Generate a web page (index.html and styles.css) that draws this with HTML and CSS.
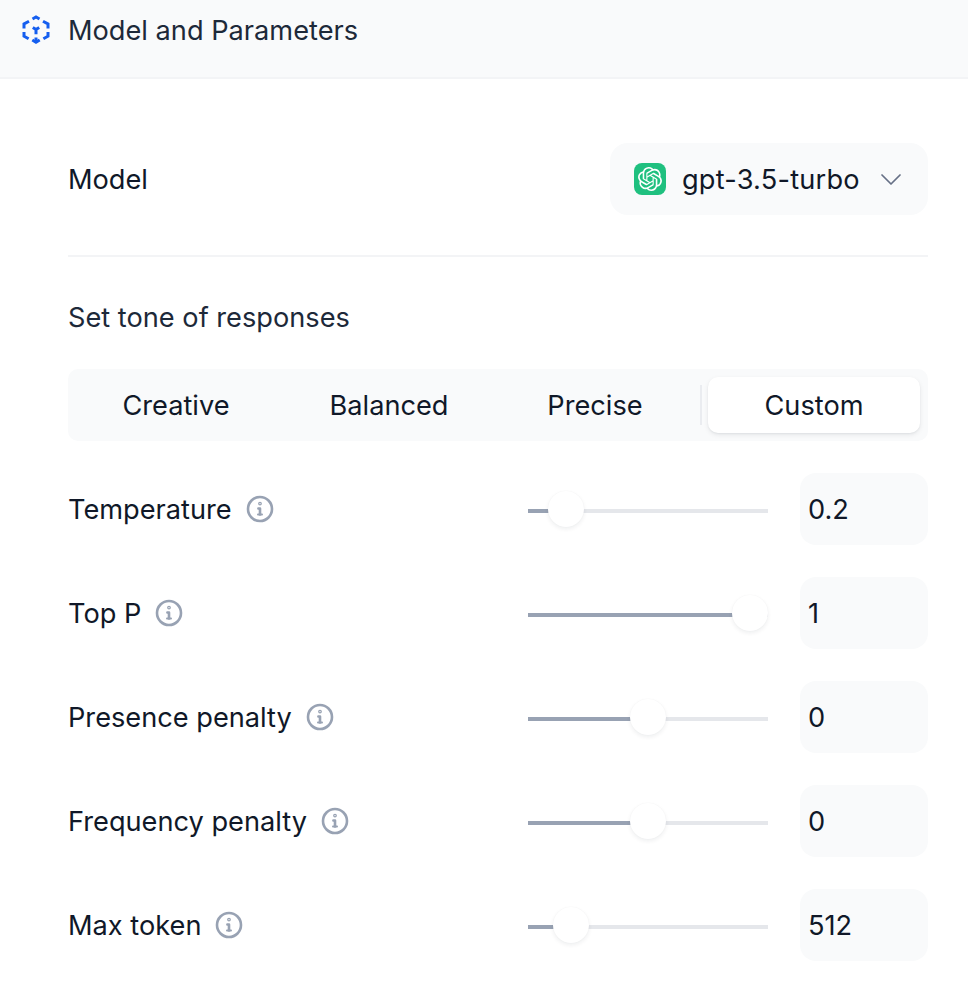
FILE: index.html
```html
<!DOCTYPE html>
<html lang="en">
<head>
<meta charset="utf-8">
<title>Model and Parameters</title>
<link rel="stylesheet" href="styles.css">
</head>
<body>
<header class="header">
  <svg class="cube" viewBox="0 0 28 30" fill="none" stroke="#155EEF" stroke-width="3" stroke-linecap="butt" stroke-linejoin="miter">
    <path d="M10.5 4 14 2l3.5 2"/>
    <path d="M7 6.2 2 9v4.4"/>
    <path d="M21 6.2 26 9v4.4"/>
    <path d="M2 17v4.2l4.6 2.6"/>
    <path d="M26 17v4.2l-4.6 2.6"/>
    <path d="M10.8 12.6 14 14.6l3.2-2M14 14.6v4.6"/>
    <path d="M14 22.5v4.5"/>
    <path d="M10.3 25 14 27.2l3.7-2.2"/>
  </svg>
  <h1 class="title">Model and Parameters</h1>
</header>
<main class="content">
  <section class="model-row">
    <span class="label">Model</span>
    <div class="select">
      <span class="logo">
        <svg viewBox="0 0 24 24" fill="#fff"><path d="M22.2819 9.8211a5.9847 5.9847 0 0 0-.5157-4.9108 6.0462 6.0462 0 0 0-6.5098-2.9A6.0651 6.0651 0 0 0 4.9807 4.1818a5.9847 5.9847 0 0 0-3.9977 2.9 6.0462 6.0462 0 0 0 .7427 7.0966 5.98 5.98 0 0 0 .511 4.9107 6.051 6.051 0 0 0 6.5146 2.9001A5.9847 5.9847 0 0 0 13.2599 24a6.0557 6.0557 0 0 0 5.7718-4.2058 5.9894 5.9894 0 0 0 3.9977-2.9001 6.0557 6.0557 0 0 0-.7475-7.0729zm-9.022 12.6081a4.4755 4.4755 0 0 1-2.8764-1.0408l.1419-.0804 4.7783-2.7582a.7948.7948 0 0 0 .3927-.6813v-6.7369l2.02 1.1686a.071.071 0 0 1 .038.052v5.5826a4.504 4.504 0 0 1-4.4945 4.4944zm-9.6607-4.1254a4.4708 4.4708 0 0 1-.5346-3.0137l.142.0852 4.783 2.7582a.7712.7712 0 0 0 .7806 0l5.8428-3.3685v2.3324a.0804.0804 0 0 1-.0332.0615L9.74 19.9502a4.4992 4.4992 0 0 1-6.1408-1.6464zM2.3408 7.8956a4.485 4.485 0 0 1 2.3655-1.9728V11.6a.7664.7664 0 0 0 .3879.6765l5.8144 3.3543-2.0201 1.1685a.0757.0757 0 0 1-.071 0l-4.8303-2.7865A4.504 4.504 0 0 1 2.3408 7.872zm16.5963 3.8558L13.1038 8.364 15.1192 7.2a.0757.0757 0 0 1 .071 0l4.8303 2.7913a4.4944 4.4944 0 0 1-.6765 8.1042v-5.6772a.79.79 0 0 0-.407-.667zm2.0107-3.0231l-.142-.0852-4.7735-2.7818a.7759.7759 0 0 0-.7854 0L9.409 9.2297V6.8974a.0662.0662 0 0 1 .0284-.0615l4.8303-2.7866a4.4992 4.4992 0 0 1 6.6802 4.66zM8.3065 12.863l-2.02-1.1638a.0804.0804 0 0 1-.038-.0567V6.0742a4.4992 4.4992 0 0 1 7.3757-3.4537l-.142.0805L8.704 5.459a.7948.7948 0 0 0-.3927.6813zm1.0976-2.3654l2.602-1.4998 2.6069 1.4998v2.9994l-2.5974 1.4997-2.6067-1.4997Z"/></svg>
      </span>
      <span class="select-text">gpt-3.5-turbo</span>
      <svg class="chevron" viewBox="0 0 20 11" fill="none" stroke="#667085" stroke-width="1.7" stroke-linecap="round" stroke-linejoin="round"><path d="M1 1l9 9 9-9"/></svg>
    </div>
  </section>
  <hr class="divider">
  <h2 class="tone-title">Set tone of responses</h2>
  <div class="tabs">
    <span class="tab">Creative</span>
    <span class="tab">Balanced</span>
    <span class="tab">Precise</span>
    <span class="tab-sep"></span>
    <span class="tab tab-active">Custom</span>
  </div>
  <div class="params">
    <div class="param">
      <div class="param-label"><span class="label">Temperature</span>
        <svg class="info" viewBox="0 0 28 28" fill="none" stroke="#98A2B3" stroke-width="2.6" stroke-linecap="round" stroke-linejoin="round"><circle cx="14" cy="14" r="12"/><path d="M14 19.5v-6h-1.6"/><path d="M12 19.5h4" stroke-width="2"/><circle cx="14" cy="8.6" r=".6"/></svg>
      </div>
      <div class="slider"><div class="track"><div class="fill" style="width:38px"></div></div><span class="thumb" style="left:20px"></span></div>
      <div class="value">0.2</div>
    </div>
    <div class="param">
      <div class="param-label"><span class="label">Top P</span>
        <svg class="info" viewBox="0 0 28 28" fill="none" stroke="#98A2B3" stroke-width="2.6" stroke-linecap="round" stroke-linejoin="round"><circle cx="14" cy="14" r="12"/><path d="M14 19.5v-6h-1.6"/><path d="M12 19.5h4" stroke-width="2"/><circle cx="14" cy="8.6" r=".6"/></svg>
      </div>
      <div class="slider"><div class="track"><div class="fill" style="width:222px"></div></div><span class="thumb" style="left:204px"></span></div>
      <div class="value">1</div>
    </div>
    <div class="param">
      <div class="param-label"><span class="label">Presence penalty</span>
        <svg class="info" viewBox="0 0 28 28" fill="none" stroke="#98A2B3" stroke-width="2.6" stroke-linecap="round" stroke-linejoin="round"><circle cx="14" cy="14" r="12"/><path d="M14 19.5v-6h-1.6"/><path d="M12 19.5h4" stroke-width="2"/><circle cx="14" cy="8.6" r=".6"/></svg>
      </div>
      <div class="slider"><div class="track"><div class="fill" style="width:120px"></div></div><span class="thumb" style="left:102px"></span></div>
      <div class="value">0</div>
    </div>
    <div class="param">
      <div class="param-label"><span class="label">Frequency penalty</span>
        <svg class="info" viewBox="0 0 28 28" fill="none" stroke="#98A2B3" stroke-width="2.6" stroke-linecap="round" stroke-linejoin="round"><circle cx="14" cy="14" r="12"/><path d="M14 19.5v-6h-1.6"/><path d="M12 19.5h4" stroke-width="2"/><circle cx="14" cy="8.6" r=".6"/></svg>
      </div>
      <div class="slider"><div class="track"><div class="fill" style="width:120px"></div></div><span class="thumb" style="left:102px"></span></div>
      <div class="value">0</div>
    </div>
    <div class="param">
      <div class="param-label"><span class="label">Max token</span>
        <svg class="info" viewBox="0 0 28 28" fill="none" stroke="#98A2B3" stroke-width="2.6" stroke-linecap="round" stroke-linejoin="round"><circle cx="14" cy="14" r="12"/><path d="M14 19.5v-6h-1.6"/><path d="M12 19.5h4" stroke-width="2"/><circle cx="14" cy="8.6" r=".6"/></svg>
      </div>
      <div class="slider"><div class="track"><div class="fill" style="width:43px"></div></div><span class="thumb" style="left:25px"></span></div>
      <div class="value">512</div>
    </div>
  </div>
</main>
</body>
</html>
```
FILE: styles.css
```css
* { box-sizing: border-box; }
html, body { margin: 0; padding: 0; }
body {
  background: #fff;
  font-family: Inter, "Noto Sans", sans-serif;
  font-size: 27.2px;
  color: #101828;
  height: 984px;
  overflow: hidden;
}
.header {
  display: flex;
  align-items: center;
  gap: 18px;
  height: 79px;
  padding: 0 0 18px 22px;
  background: #F9FAFB;
  border-bottom: 2px solid #F3F4F6;
}
.cube { width: 28px; height: 30px; flex: none; }
.title {
  margin: 0;
  padding-top: 2px;
  font-size: 27.2px;
  font-weight: 400;
  color: #1D2939;
  line-height: 36px;
}
.content { padding: 64px 40px 0 68px; }
.model-row {
  display: flex;
  justify-content: space-between;
  align-items: center;
  height: 72px;
}
.label { padding-top: 2px; color: #101828; line-height: 36px; white-space: nowrap; }
.select {
  display: flex;
  align-items: center;
  width: 318px;
  height: 72px;
  padding-left: 24px;
  background: #F9FAFB;
  border-radius: 18px;
}
.logo {
  display: flex;
  align-items: center;
  justify-content: center;
  width: 32px;
  height: 32px;
  border-radius: 8px;
  background: #1FC07F;
  flex: none;
}
.logo svg { width: 24px; height: 24px; }
.select-text { margin-left: 16px; color: #101828; letter-spacing: 0.2px; }
.chevron { width: 20px; height: 11px; margin-left: 21px; }
.divider {
  margin: 40px 0 0;
  border: 0;
  height: 2px;
  background: #F3F4F6;
}
.tone-title {
  margin: 43px 0 0;
  font-size: 27.2px;
  font-weight: 400;
  line-height: 36px;
  color: #1D2939;
}
.tabs {
  display: grid;
  grid-template-columns: 200px 226px 186px 20px 212px;
  align-items: center;
  height: 72px;
  margin-top: 33px;
  padding: 8px;
  background: #F9FAFB;
  border-radius: 10px;
}
.tab {
  display: flex;
  align-items: center;
  justify-content: center;
  height: 56px;
  color: #101828;
}
.tab-sep {
  justify-self: end;
  width: 2px;
  height: 40px;
  margin-right: 6px;
  background: #EAECF0;
}
.tab-active {
  background: #fff;
  border-radius: 10px;
  box-shadow: 0 2px 5px rgba(16, 24, 40, 0.08), 0 1px 2px rgba(16, 24, 40, 0.05);
}
.params {
  display: flex;
  flex-direction: column;
  gap: 32px;
  margin-top: 32px;
}
.param {
  display: flex;
  align-items: center;
  height: 72px;
}
.param-label {
  display: flex;
  align-items: center;
  gap: 14px;
  width: 460px;
}
.info { width: 28px; height: 28px; flex: none; }
.slider {
  position: relative;
  width: 240px;
  height: 36px;
  margin-right: 32px;
}
.track {
  height: 4px;
  margin-top: 18px;
  background: #E5E7EB;
}
.fill { height: 100%; background: #98A2B3; }
.thumb {
  position: absolute;
  top: 0;
  width: 36px;
  height: 36px;
  border-radius: 50%;
  background: #fff;
  box-shadow: 0 2px 4px rgba(16, 24, 40, 0.07), 0 0 1px rgba(16, 24, 40, 0.05);
}
.value {
  display: flex;
  align-items: center;
  width: 128px;
  height: 72px;
  padding-left: 8px;
  background: #F9FAFB;
  border-radius: 16px;
  color: #101828;
}
```
